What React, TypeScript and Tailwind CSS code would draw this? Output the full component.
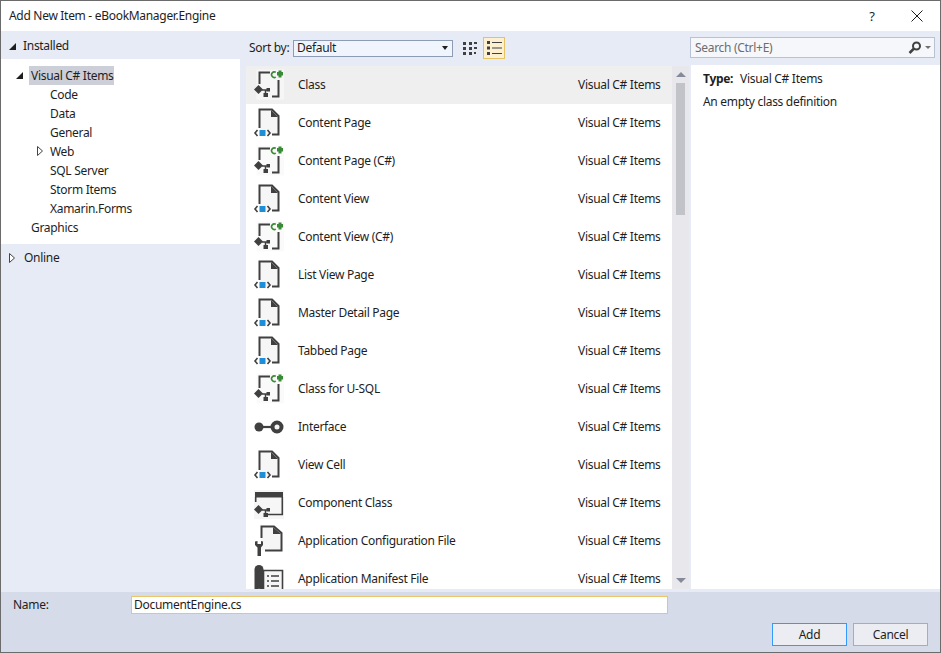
import React from "react";

const INK = "#404040";

function Cluster({ x = 0, y = 0 }: { x?: number; y?: number }) {
  return (
    <g transform={`translate(${x} ${y})`}>
      <path d="M5.500 19L10 23.500L5.500 28L1 23.500Z" fill={INK} />
      <path d="M9 24H14.500M12.500 24V28" fill="none" stroke={INK} strokeWidth="1.500" />
      <rect x="10.500" y="27" width="4.500" height="4" fill={INK} />
      <rect x="13.500" y="22" width="3.500" height="3.500" fill={INK} />
    </g>
  );
}

function ClassIcon({ hi }: { hi?: boolean }) {
  return (
    <svg width="32" height="38" viewBox="0 0 32 38" className="shrink-0">
      <path d="M3.500 22V3.500H31V33.500H3.500Z" fill={hi ? "#f6f6f6" : "#fafafa"} />
      <path d="M6.500 18V6.500H17M25.500 14V30.500H19" fill="none" stroke={INK} strokeWidth="2" />
      <path d="M22.800 6.300A2.800 2.800 0 1 0 22.800 11.100" fill="none" stroke="#388a34" strokeWidth="1.600" />
      <path d="M25.500 4.500H28.500V6H30V9.500H28.500V11.500H25.500V9.500H24V6H25.500Z" fill="#388a34" />
      <Cluster />
    </svg>
  );
}
function DocIcon() {
  return (
    <svg width="32" height="38" viewBox="0 0 32 38" className="shrink-0">
      <path d="M6.500 5.500H19L25.500 12V30.500H6.500Z" fill="#f6f6f6" />
      <path d="M6.500 24V5.500H19L25.500 12V30.500H19" fill="none" stroke={INK} strokeWidth="2" />
      <path d="M18 6V13H25Z" fill={INK} />
      <rect x="6.500" y="26" width="6" height="6" fill="#1e8fd6" />
      <path d="M4.500 26L2 29L4.500 32M14.500 26L17 29L14.500 32" fill="none" stroke={INK} strokeWidth="1.600" />
    </svg>
  );
}
function InterfaceIcon() {
  return (
    <svg width="32" height="38" viewBox="0 0 32 38" className="shrink-0">
      <circle cx="6" cy="19" r="4.500" fill={INK} />
      <path d="M8 19H18" stroke={INK} strokeWidth="2.200" />
      <circle cx="24" cy="19" r="4.500" fill="#f6f6f6" stroke={INK} strokeWidth="4" />
    </svg>
  );
}
function ComponentIcon() {
  return (
    <svg width="32" height="38" viewBox="0 0 32 38" className="shrink-0">
      <rect x="1" y="6" width="30" height="29" fill="#f6f6f6" />
      <rect x="2" y="8" width="28" height="5.500" fill={INK} />
      <path d="M2.700 18V13M29.300 13V30.500H15" fill="none" stroke={INK} strokeWidth="1.600" />
      <Cluster x={0} y={2} />
    </svg>
  );
}
function ConfigIcon() {
  return (
    <svg width="32" height="38" viewBox="0 0 32 38" className="shrink-0">
      <path d="M8.500 4.500H21L28.500 11V28.500H8.500Z" fill="#f6f6f6" />
      <path d="M8.500 16V4.500H21L28.500 11V28.500H12" fill="none" stroke={INK} strokeWidth="2" />
      <path d="M20 5V12H28Z" fill={INK} />
      <path d="M2 19.500V23L4.500 25.500V34H8V25.500L10 23V19.500L8 19V22H4.500V19Z" fill={INK} />
    </svg>
  );
}
function ManifestIcon() {
  return (
    <svg width="32" height="38" viewBox="0 0 32 38" className="shrink-0">
      <path d="M1.500 9.500A4.500 4.500 0 0 1 10.500 9.500V34H1.500Z" fill={INK} />
      <circle cx="6" cy="31" r="2.200" fill="#f6f6f6" />
      <path d="M10.500 10.500H29.500V34H10.500Z" fill="#f6f6f6" stroke={INK} strokeWidth="1.600" />
      <path d="M14 16H16M18 16H26M14 21H16M18 21H26M14 26H16M18 26H26M14 31H16M18 31H26" stroke={INK} strokeWidth="1.600" />
    </svg>
  );
}

const ITEMS: [string, React.ReactNode][] = [
  ["Class", <ClassIcon hi />],
  ["Content Page", <DocIcon />],
  ["Content Page (C#)", <ClassIcon />],
  ["Content View", <DocIcon />],
  ["Content View (C#)", <ClassIcon />],
  ["List View Page", <DocIcon />],
  ["Master Detail Page", <DocIcon />],
  ["Tabbed Page", <DocIcon />],
  ["Class for U-SQL", <ClassIcon />],
  ["Interface", <InterfaceIcon />],
  ["View Cell", <DocIcon />],
  ["Component Class", <ComponentIcon />],
  ["Application Configuration File", <ConfigIcon />],
  ["Application Manifest File", <ManifestIcon />],
];

const TREE = ["Code", "Data", "General", "Web", "SQL Server", "Storm Items", "Xamarin.Forms"];

function Solid() {
  return <span className="block w-0 h-0 border-l-[7px] border-l-transparent border-b-[7px] border-b-[#1e1e1e]" />;
}
function Hollow() {
  return (
    <svg width="6" height="10" viewBox="0 0 6 10" className="block">
      <path d="M.5 .5L5.500 5L.5 9.500Z" fill="#fff" stroke="#444" />
    </svg>
  );
}

export default function App() {
  return (
    <div
      className="w-[941px] h-[653px] flex flex-col border border-[#6b6b6b] bg-white text-[12px] leading-[16px] text-[#1e1e1e] overflow-hidden tracking-[-0.3px]"
      style={{ fontFamily: '"Noto Sans", "Open Sans", sans-serif' }}
    >
      <div className="h-[30px] shrink-0 flex items-center pl-2 pr-[17px]">
        <span className="flex-1">Add New Item - eBookManager.Engine</span>
        <span className="w-[16px] text-[13px] mr-[31px] text-center">?</span>
        <svg width="12" height="12" viewBox="0 0 12 12">
          <path d="M.5 .5L11.500 11.500M11.500 .5L.5 11.500" stroke="#1e1e1e" strokeWidth="1" />
        </svg>
      </div>

      <div className="flex-1 min-h-0 flex bg-[#e6ebf5]">
        <div className="w-[239px] shrink-0 flex flex-col">
          <div className="h-[28px] shrink-0 flex items-center pl-[8px] gap-[7px] pt-[2px]">
            <Solid />
            <span>Installed</span>
          </div>
          <div className="h-[185px] shrink-0 bg-white pt-[7px] flex flex-col">
            <div className="h-[19px] flex items-center pl-[15px]">
              <Solid />
              <span className="ml-[6px] w-[85px] h-[19px] flex items-center pl-[2px] bg-[#ccced8] whitespace-nowrap">
                Visual C# Items
              </span>
            </div>
            {TREE.map((t) => (
              <div key={t} className="h-[19px] flex items-center pl-[49px] relative">
                {t === "Web" && (
                  <span className="absolute left-[36px] top-[4px]">
                    <Hollow />
                  </span>
                )}
                {t}
              </div>
            ))}
            <div className="h-[19px] flex items-center pl-[30px]">Graphics</div>
          </div>
          <div className="h-[28px] shrink-0 flex items-center pl-[8px] gap-[9px]">
            <Hollow />
            <span>Online</span>
          </div>
        </div>

        <div className="w-[444px] ml-[6px] shrink-0 flex flex-col">
          <div className="h-[35px] shrink-0 flex items-center pl-[3px] pb-[1px]">
            <span className="w-[44px]">Sort by:</span>
            <div className="w-[160px] h-[17px] border border-[#8e9bb5] bg-[#f0f4fc] flex items-center pl-[3px] pr-[4px]">
              <span className="flex-1">Default</span>
              <span className="w-0 h-0 border-x-[3.5px] border-x-transparent border-t-[4px] border-t-[#1e1e1e]" />
            </div>
            <svg width="16" height="16" viewBox="0 0 16 16" className="ml-[9px]">
              <path d="M1 2h3v3H1zM7 2h3v3H7zM1 7h3v3H1zM7 7h3v3H7zM1 12h3v3H1zM7 12h3v3H7zM12 2h3v2h-3zM12 7h3v2h-3zM12 12h2v2h-2z" fill="#404040" />
            </svg>
            <div className="w-[22px] h-[22px] ml-[5px] border border-[#e5c365] bg-[#fdf0d0] flex items-center justify-center">
              <svg width="16" height="16" viewBox="0 0 16 16">
                <path d="M1 1h3v3H1zM1 6.500h3v3H1zM1 12h3v3H1zM6 2h10v1H6zM6 7.500h10v1H6zM6 13h10v1H6z" fill="#404040" />
              </svg>
            </div>
          </div>
          <div className="flex-1 min-h-0 mb-[3px] flex">
            <div className="w-[426px] bg-white overflow-hidden">
              {ITEMS.map(([name, icon], i) => (
                <div key={name} className={`h-[38px] flex items-center pl-[7px] ${i === 0 ? "bg-[#efefef]" : ""}`}>
                  {icon}
                  <span className="ml-[13px] w-[280px] whitespace-nowrap">{name}</span>
                  <span className="whitespace-nowrap">Visual C# Items</span>
                </div>
              ))}
            </div>
            <div className="w-[17px] bg-[#e8e8ec] flex flex-col items-center">
              <div className="h-[17px] flex items-center justify-center">
                <span className="w-0 h-0 border-x-[5px] border-x-transparent border-b-[5px] border-b-[#868999]" />
              </div>
              <div className="w-[9px] h-[132px] bg-[#c2c3c9]" />
              <div className="flex-1" />
              <div className="h-[17px] flex items-center justify-center">
                <span className="w-0 h-0 border-x-[5px] border-x-transparent border-t-[5px] border-t-[#868999]" />
              </div>
            </div>
          </div>
        </div>

        <div className="flex-1 flex flex-col">
          <div className="h-[34px] shrink-0 pt-[6px] pr-[5px]">
            <div className="h-[21px] bg-[#f6f7fb] border border-[#b9c2d4] flex items-center pl-[4px] pr-[3px] text-[#6d6d6d]">
              <span className="flex-1">Search (Ctrl+E)</span>
              <svg width="14" height="14" viewBox="0 0 14 14">
                <circle cx="8.500" cy="5" r="3.500" fill="none" stroke="#404040" strokeWidth="2" />
                <path d="M6 7.500L1.500 12" stroke="#404040" strokeWidth="2.500" />
              </svg>
              <span className="ml-[3px] w-0 h-0 border-x-[3px] border-x-transparent border-t-[3px] border-t-[#707070]" />
            </div>
          </div>
          <div className="flex-1 min-h-0 mb-[3px] ml-[1px] bg-white pl-[12px] pt-[5px]">
            <div className="h-[18px] flex items-center">
              <span className="font-bold w-[37px]">Type:</span>
              <span>Visual C# Items</span>
            </div>
            <div className="h-[18px] mt-[5px] flex items-center">An empty class definition</div>
          </div>
        </div>
      </div>

      <div className="h-[60px] shrink-0 bg-[#d6dbe9] flex flex-col">
        <div className="h-[31px] flex items-center pl-[12px] pb-[7px] pt-[2px]">
          <span className="w-[118px]">Name:</span>
          <div className="w-[537px] h-[18px] bg-white border border-[#eac56a] flex items-center pl-[2px]">DocumentEngine.cs</div>
        </div>
        <div className="flex justify-end gap-[6px] pr-[12px]">
          <button className="w-[75px] h-[23px] bg-[#ecedf2] border border-[#3399ff]">Add</button>
          <button className="w-[75px] h-[23px] bg-[#ecedf2] border border-[#acacac]">Cancel</button>
        </div>
      </div>
    </div>
  );
}
